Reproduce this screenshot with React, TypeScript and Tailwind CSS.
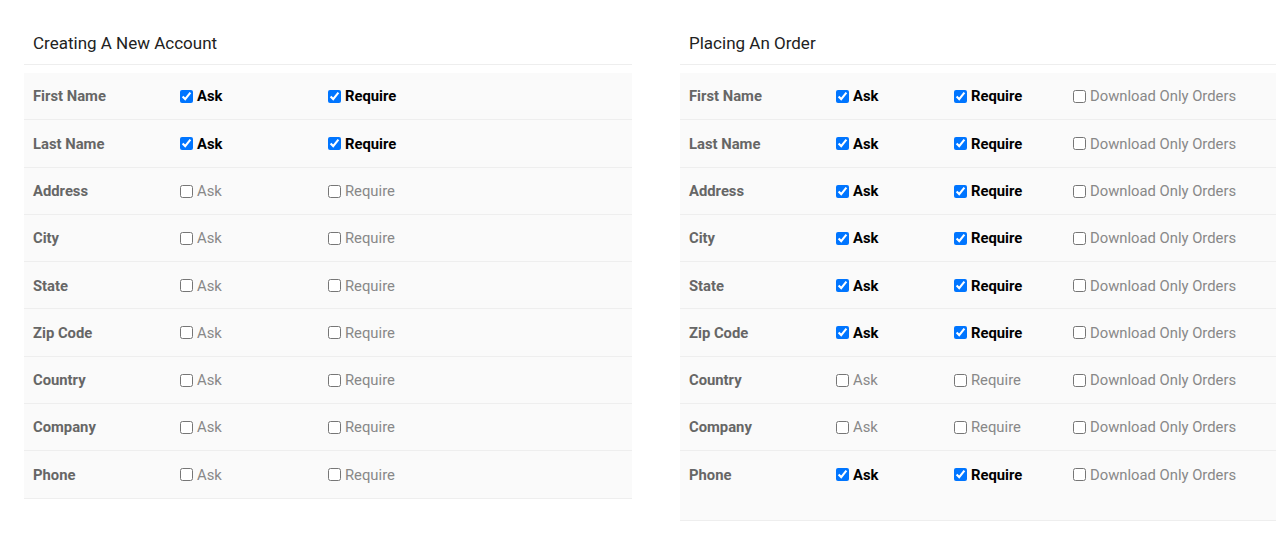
type Field = { name: string; ask: boolean; require: boolean };

const accountFields: Field[] = [
  { name: "First Name", ask: true, require: true },
  { name: "Last Name", ask: true, require: true },
  { name: "Address", ask: false, require: false },
  { name: "City", ask: false, require: false },
  { name: "State", ask: false, require: false },
  { name: "Zip Code", ask: false, require: false },
  { name: "Country", ask: false, require: false },
  { name: "Company", ask: false, require: false },
  { name: "Phone", ask: false, require: false },
];

const orderFields: Field[] = [
  { name: "First Name", ask: true, require: true },
  { name: "Last Name", ask: true, require: true },
  { name: "Address", ask: true, require: true },
  { name: "City", ask: true, require: true },
  { name: "State", ask: true, require: true },
  { name: "Zip Code", ask: true, require: true },
  { name: "Country", ask: false, require: false },
  { name: "Company", ask: false, require: false },
  { name: "Phone", ask: true, require: true },
];

const Check = ({ label, checked, width }: { label: string; checked: boolean; width: string }) => {
  return (
    <label className={`flex items-center ${width}`}>
      <input type="checkbox" defaultChecked={checked} className="w-[13px] h-[13px] m-0" />
      <span className={checked ? "ml-1 font-bold text-black" : "ml-1 text-[#888]"}>{label}</span>
    </label>
  );
};

const Panel = ({ title, fields, orders }: { title: string; fields: Field[]; orders?: boolean }) => {
  return (
    <section className="w-[608px] shrink-0">
      <div className="h-[65px] flex items-end pb-[9px] pl-[9px] border-b border-[#eeeeee]">
        <h2 className="text-[17px] leading-6 text-[#222]">{title}</h2>
      </div>
      <div className="mt-2">
        {fields.map((f, i) => {
          const last = orders && i === fields.length - 1;
          return (
            <div
              key={f.name}
              className={`${last ? "h-[70px]" : "h-[47.3px]"} bg-[#fafafa] border-b border-[#eeeeee] text-[14.8px]`}
            >
              <div className="h-[46px] flex items-center pt-px">
                <div className="w-[156px] pl-[9px] font-bold text-[#666]">{f.name}</div>
                <Check label="Ask" checked={f.ask} width={orders ? "w-[118px]" : "w-[148px]"} />
                <Check label="Require" checked={f.require} width={orders ? "w-[119px]" : "w-[148px]"} />
                {orders && <Check label="Download Only Orders" checked={false} width="" />}
              </div>
            </div>
          );
        })}
      </div>
      {orders && (
        <div className="mt-4 pl-3 flex items-center text-[14.8px] text-[#888]">
          <input type="checkbox" className="w-[13px] h-[13px] m-0" />
          <span className="ml-1">Use billing address for shipping</span>
        </div>
      )}
    </section>
  );
};

const App = () => {
  return (
    <div className="w-[1276px] h-[542px] overflow-hidden bg-white flex gap-12 pl-6 font-['Roboto',sans-serif]">
      <Panel title="Creating A New Account" fields={accountFields} />
      <Panel title="Placing An Order" fields={orderFields} orders />
    </div>
  );
};

export default App;
